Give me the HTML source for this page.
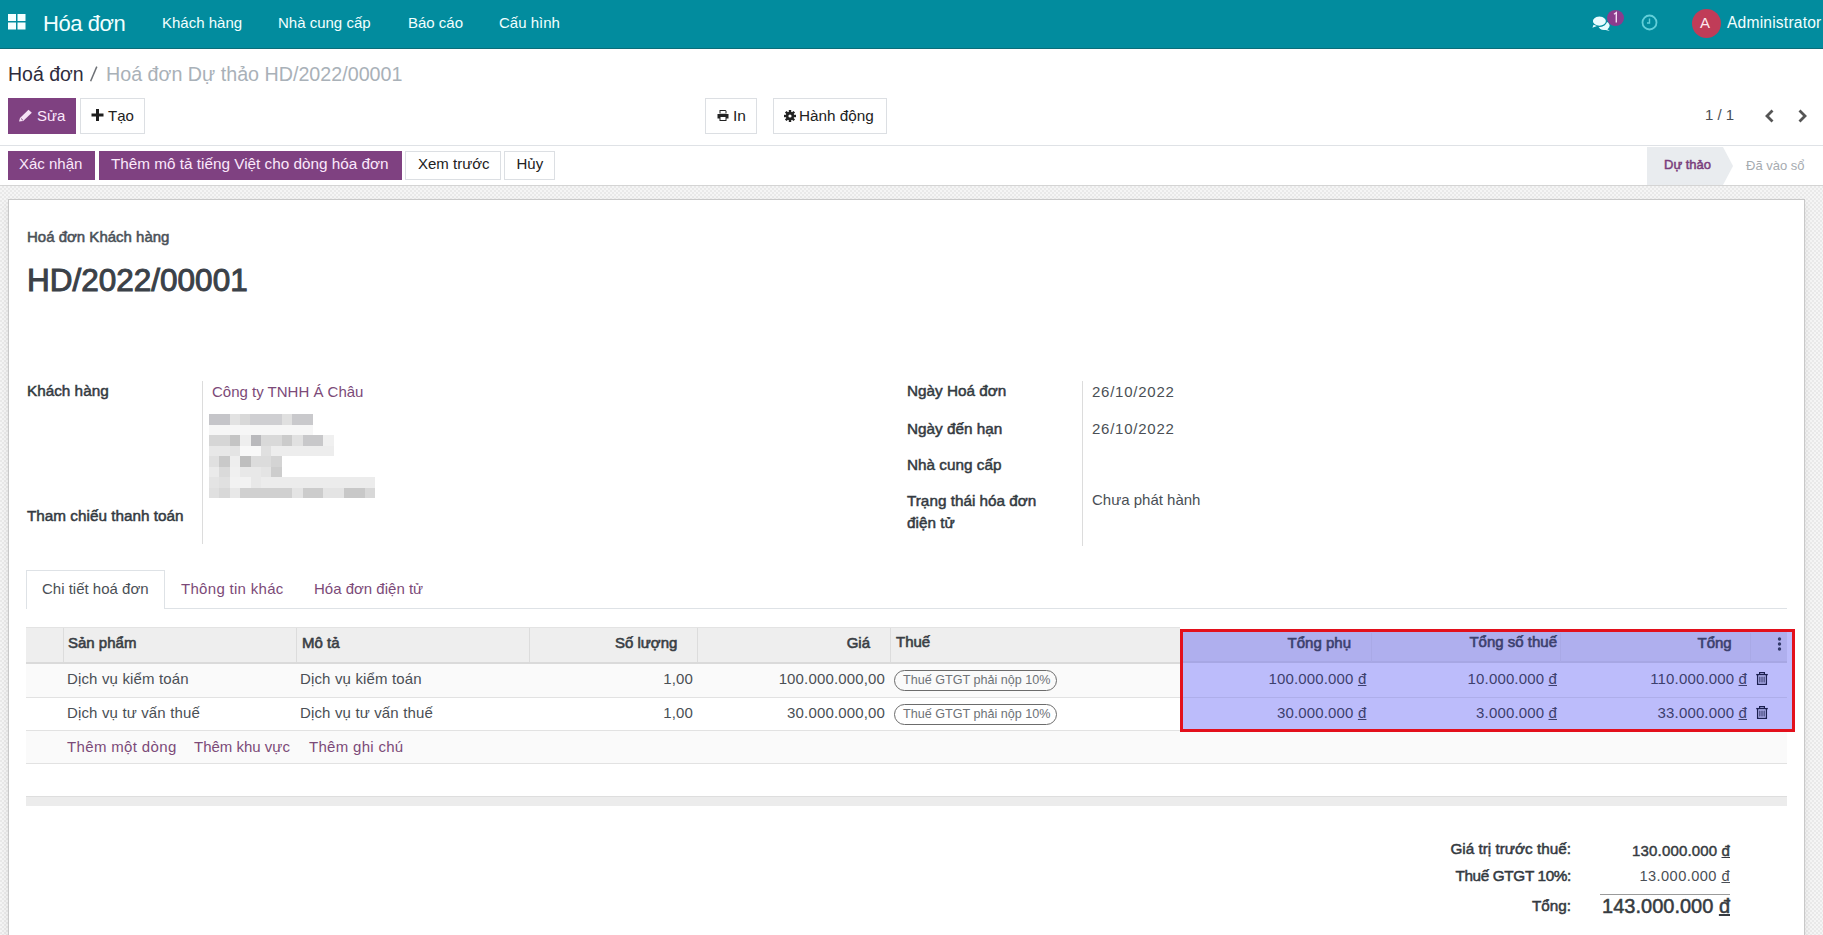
<!DOCTYPE html>
<html><head><meta charset="utf-8">
<style>
*{box-sizing:border-box;margin:0;padding:0}
html,body{width:1823px;height:935px;overflow:hidden;background:#fff;font-family:"Liberation Sans",sans-serif;color:#4c4c4c}
.a{position:absolute}
.t{position:absolute;line-height:1;white-space:nowrap}
.b{font-weight:bold}
#nav{left:0;top:0;width:1823px;height:49px;background:#028c9e;border-bottom:1px solid #0b6d79}
.nv{color:#f2ffff;font-size:15px}
.btn{position:absolute;border:1px solid #dcdfe3;background:#fff}
.pbtn{position:absolute;background:#7f4181}
.lbl{font-size:15.3px;-webkit-text-stroke:0.5px #343a41;color:#343a41}
.val{font-size:15px;color:#4a4f55}
.dt{letter-spacing:0.75px}
.lnk{font-size:15px;color:#7c4a78}
.th{font-size:15px;-webkit-text-stroke:0.6px currentColor;color:#3a3f45}
.td{font-size:15px;color:#4a4f55;letter-spacing:0.15px}
.ov{color:#3c406e}
</style></head><body>

<!-- NAVBAR -->
<div id="nav" class="a"></div>
<svg class="a" style="left:8px;top:14px" width="18" height="16" viewBox="0 0 18 16">
  <rect x="0" y="0" width="8" height="7" fill="#f4ffff"/><rect x="9.5" y="0" width="8" height="7" fill="#f4ffff"/>
  <rect x="0" y="8.5" width="8" height="7" fill="#f4ffff"/><rect x="9.5" y="8.5" width="8" height="7" fill="#f4ffff"/>
</svg>
<div class="t nv" style="left:43px;top:13.3px;font-size:22px;letter-spacing:-0.45px">Hóa đơn</div>
<div class="t nv" style="left:162px;top:14.8px">Khách hàng</div>
<div class="t nv" style="left:278px;top:14.8px">Nhà cung cấp</div>
<div class="t nv" style="left:408px;top:14.8px">Báo cáo</div>
<div class="t nv" style="left:499px;top:14.8px">Cấu hình</div>

<!-- chat icon -->
<svg class="a" style="left:1590px;top:14px" width="22" height="18" viewBox="0 0 22 18">
  <ellipse cx="14" cy="11.6" rx="5.6" ry="4.3" fill="#e6fbff"/>
  <path d="M16 14.3 L19.8 17 L13.5 15.4 Z" fill="#e6fbff"/>
  <ellipse cx="9.4" cy="7.1" rx="7.3" ry="5.4" fill="#028c9e"/>
  <ellipse cx="9.4" cy="7.1" rx="7.1" ry="5.2" fill="#eafcff" stroke="#028c9e" stroke-width="1.2"/>
  <path d="M3.5 10.8 L2.4 13.8 L7 11.9 Z" fill="#eafcff"/>
</svg>
<div class="a" style="left:1607px;top:10px;width:17px;height:16px;border-radius:50%;background:#8b3c8d"></div>
<svg class="a" style="left:1607px;top:10px" width="17" height="16" viewBox="0 0 17 16"><path d="M7 4.2 L9.3 2.6 V12.6" fill="none" stroke="#f4dcf4" stroke-width="1.4"/></svg>
<!-- clock -->
<svg class="a" style="left:1641px;top:14px" width="17" height="17" viewBox="0 0 17 17">
  <circle cx="8.5" cy="8.5" r="7" fill="none" stroke="#62cfd9" stroke-width="1.8"/>
  <path d="M8.5 4.5 V9 H6" fill="none" stroke="#62cfd9" stroke-width="1.4"/>
</svg>
<div class="a" style="left:1692px;top:9px;width:29px;height:29px;border-radius:50%;background:#c03c58"></div>
<div class="t" style="left:1700px;top:15px;font-size:15px;color:#fde8ee">A</div>
<div class="t nv" style="left:1727px;top:15.3px;font-size:15.6px;letter-spacing:0.2px">Administrator</div>

<!-- BREADCRUMB -->
<div class="t" style="left:8px;top:64.8px;font-size:19.5px;color:#2e2b3c">Hoá đơn</div>
<svg class="a" style="left:88px;top:64px" width="12" height="20" viewBox="0 0 12 20"><path d="M2.6 17.2 L8.8 2.6" stroke="#6e7176" stroke-width="1.5" fill="none"/></svg>
<div class="t" style="left:106px;top:64.8px;font-size:19.7px;color:#a9b1b8">Hoá đơn Dự thảo HD/2022/00001</div>

<!-- buttons -->
<div class="pbtn" style="left:8px;top:98px;width:68px;height:36px"></div>
<svg class="a" style="left:18px;top:109px" width="15" height="13" viewBox="0 0 15 13">
  <path d="M1 12.5 L2 9 L10.5 0.8 L13.8 3.8 L5.2 12 Z" fill="#f6e2f6"/>
  <path d="M3 9.5 L5 11.3" stroke="#7f4181" stroke-width="0.9"/>
</svg>
<div class="t" style="left:37px;top:108.2px;font-size:15px;color:#fbe8fb">Sửa</div>
<div class="btn" style="left:80px;top:98px;width:65px;height:36px"></div>
<svg class="a" style="left:91px;top:109px" width="13" height="12" viewBox="0 0 13 12">
  <path d="M5 0 H8 V4.5 H12.5 V7.5 H8 V12 H5 V7.5 H0.5 V4.5 H5 Z" fill="#1e1e1e"/>
</svg>
<div class="t" style="left:108px;top:108.2px;font-size:15px;color:#222">Tạo</div>

<div class="btn" style="left:705px;top:98px;width:52px;height:36px"></div>
<svg class="a" style="left:717px;top:110px" width="12" height="11" viewBox="0 0 12 11">
  <path d="M2.5 0 H8.5 L9.5 1 V3.5 H2.5 Z M0.5 4 H11.5 V8.5 H9.5 V11 H2.5 V8.5 H0.5 Z" fill="#222"/>
  <rect x="3.5" y="7" width="5" height="3" fill="#fff"/>
  <rect x="3.5" y="1" width="5" height="2.5" fill="#fff"/>
</svg>
<div class="t" style="left:733px;top:108.4px;font-size:15.5px;color:#222">In</div>
<div class="btn" style="left:773px;top:98px;width:114px;height:36px"></div>
<svg class="a" style="left:784px;top:110px" width="12" height="12" viewBox="0 0 12 12">
  <g fill="#222"><circle cx="6" cy="6" r="4.2"/>
  <rect x="4.8" y="0" width="2.4" height="12"/><rect x="0" y="4.8" width="12" height="2.4"/>
  <rect x="4.8" y="0" width="2.4" height="12" transform="rotate(45 6 6)"/><rect x="4.8" y="0" width="2.4" height="12" transform="rotate(-45 6 6)"/></g>
  <circle cx="6" cy="6" r="1.6" fill="#fff"/>
</svg>
<div class="t" style="left:799px;top:108.4px;font-size:15.3px;color:#222">Hành động</div>

<div class="t" style="left:1705px;top:107.3px;font-size:15px;color:#4a4f55">1 / 1</div>
<svg class="a" style="left:1764px;top:109px" width="11" height="14" viewBox="0 0 11 14">
  <path d="M8.5 1.5 L3 7 L8.5 12.5" fill="none" stroke="#555" stroke-width="2.8"/>
</svg>
<svg class="a" style="left:1797px;top:109px" width="11" height="14" viewBox="0 0 11 14">
  <path d="M2.5 1.5 L8 7 L2.5 12.5" fill="none" stroke="#555" stroke-width="2.8"/>
</svg>

<div class="a" style="left:0;top:145px;width:1823px;height:1px;background:#dfe2e6"></div>

<!-- STATUS BAR -->
<div class="pbtn" style="left:8px;top:151px;width:87px;height:29px"></div>
<div class="t" style="left:19px;top:156.3px;font-size:15px;color:#fbe8fb">Xác nhận</div>
<div class="pbtn" style="left:99px;top:151px;width:303px;height:29px"></div>
<div class="t" style="left:111px;top:156.3px;font-size:15.3px;color:#fbe8fb">Thêm mô tả tiếng Việt cho dòng hóa đơn</div>
<div class="btn" style="left:405px;top:151px;width:96px;height:29px"></div>
<div class="t" style="left:418px;top:156.3px;font-size:15px;color:#222">Xem trước</div>
<div class="btn" style="left:504px;top:151px;width:51px;height:29px"></div>
<div class="t" style="left:516.5px;top:156.3px;font-size:15px;color:#222">Hủy</div>

<svg class="a" style="left:1647px;top:147px" width="176" height="38" viewBox="0 0 176 38">
  <path d="M0 0 H76 L86 19 L76 38 H0 Z" fill="#e9ecef"/>
</svg>
<div class="t" style="left:1664px;top:158.3px;font-size:13px;color:#7a3d7c;-webkit-text-stroke:0.5px #7a3d7c">Dự thảo</div>
<div class="t" style="left:1746px;top:159px;font-size:13px;color:#a6abb0">Đã vào sổ</div>

<!-- SHEET BACKGROUND -->
<div class="a" style="left:0;top:185px;width:1823px;height:750px;background:repeating-conic-gradient(#e9e9e9 0 25%,#f5f5f5 0 50%) 0 0/4px 4px;border-top:1px solid #d4d4d4"></div>
<div class="a" style="left:8px;top:199px;width:1797px;height:800px;background:#fff;border:1px solid #c8c8c8;box-shadow:0 4px 8px rgba(0,0,0,0.08)"></div>

<div class="t" style="left:27px;top:229.3px;font-size:15px;-webkit-text-stroke:0.55px #4b5158;color:#4b5158">Hoá đơn Khách hàng</div>
<div class="t" style="left:27px;top:264.5px;font-size:31.5px;color:#3b4148;-webkit-text-stroke:1px #3b4148;letter-spacing:0px">HD/2022/00001</div>

<!-- fields left -->
<div class="t lbl" style="left:27px;top:382.7px">Khách hàng</div>
<div class="a" style="left:202px;top:381px;width:1px;height:163px;background:#dcdcdc"></div>
<div class="t lnk" style="left:212px;top:384px">Công ty TNHH Á Châu</div>
<svg class="a" style="left:209px;top:414px;filter:blur(0.5px)" width="170" height="85" viewBox="0 0 170 85" shape-rendering="crispEdges">
 <g>
  <rect x="0" y="0" width="21" height="10.5" fill="#c5c5c9"/><rect x="21" y="0" width="10.4" height="10.5" fill="#e2e2e2"/><rect x="31" y="0" width="10.4" height="10.5" fill="#d8d8d8"/><rect x="41.2" y="0" width="31.4" height="10.5" fill="#cfcfd2"/><rect x="72.5" y="0" width="10.4" height="10.5" fill="#e0e0e0"/><rect x="83" y="0" width="21" height="10.5" fill="#c9c9cc"/>
  <rect x="0" y="10.5" width="104" height="10.5" fill="#f6f6f6"/>
  <rect x="0" y="21" width="20.8" height="10.5" fill="#d6d6d6"/><rect x="20.8" y="21" width="10.4" height="10.5" fill="#c4c4c4"/><rect x="31.2" y="21" width="10.4" height="10.5" fill="#eeeeee"/><rect x="41.6" y="21" width="10.4" height="10.5" fill="#b9b9bc"/><rect x="52" y="21" width="20.8" height="10.5" fill="#d9d9d9"/><rect x="72.8" y="21" width="10.4" height="10.5" fill="#cbcbcb"/><rect x="83.2" y="21" width="10.4" height="10.5" fill="#e1e1e1"/><rect x="93.6" y="21" width="20.8" height="10.5" fill="#c8c8ca"/><rect x="114.4" y="21" width="10.4" height="10.5" fill="#f0f0f0"/>
  <rect x="0" y="31.5" width="20.8" height="10.5" fill="#e8e8e8"/><rect x="20.8" y="31.5" width="10.4" height="10.5" fill="#e4e4e4"/><rect x="31.2" y="31.5" width="20.8" height="10.5" fill="#f8f8f8"/><rect x="52" y="31.5" width="10.4" height="10.5" fill="#e0e0e0"/><rect x="62.4" y="31.5" width="62.4" height="10.5" fill="#ededed"/>
  <rect x="0" y="42" width="10.4" height="10.5" fill="#e0e0e0"/><rect x="10.4" y="42" width="10.4" height="10.5" fill="#c9c9c9"/><rect x="20.8" y="42" width="10.4" height="10.5" fill="#eeeeee"/><rect x="31.2" y="42" width="10.4" height="10.5" fill="#bebebe"/><rect x="41.6" y="42" width="20.8" height="10.5" fill="#dcdcdc"/><rect x="62.4" y="42" width="10.4" height="10.5" fill="#d4d4d4"/>
  <rect x="0" y="52.5" width="10.4" height="10.5" fill="#eaeaea"/><rect x="10.4" y="52.5" width="10.4" height="10.5" fill="#dadada"/><rect x="20.8" y="52.5" width="10.4" height="10.5" fill="#f0f0f0"/><rect x="31.2" y="52.5" width="20.8" height="10.5" fill="#e8e8e8"/><rect x="52" y="52.5" width="10.4" height="10.5" fill="#e4e4e4"/><rect x="62.4" y="52.5" width="10.4" height="10.5" fill="#cdcdcd"/>
  <rect x="0" y="63" width="10.4" height="10.5" fill="#e4e4e4"/><rect x="10.4" y="63" width="10.4" height="10.5" fill="#e0e0e0"/><rect x="20.8" y="63" width="20.8" height="10.5" fill="#f2f2f2"/><rect x="41.6" y="63" width="10.4" height="10.5" fill="#e8e8e8"/><rect x="52" y="63" width="114.4" height="10.5" fill="#ececec"/>
  <rect x="0" y="73.5" width="10.4" height="10.5" fill="#e0e0e0"/><rect x="10.4" y="73.5" width="10.4" height="10.5" fill="#d8d8d8"/><rect x="20.8" y="73.5" width="10.4" height="10.5" fill="#e8e8e8"/><rect x="31.2" y="73.5" width="52" height="10.5" fill="#d0d0d0"/><rect x="83.2" y="73.5" width="10.4" height="10.5" fill="#e4e4e4"/><rect x="93.6" y="73.5" width="20.8" height="10.5" fill="#cccccc"/><rect x="114.4" y="73.5" width="20.8" height="10.5" fill="#e4e4e4"/><rect x="135.2" y="73.5" width="20.8" height="10.5" fill="#c8c8c8"/><rect x="156" y="73.5" width="10.4" height="10.5" fill="#d8d8d8"/>
 </g>
</svg>
<div class="t lbl" style="left:27px;top:507.7px">Tham chiếu thanh toán</div>

<!-- fields right -->
<div class="t lbl" style="left:907px;top:382.5px">Ngày Hoá đơn</div>
<div class="t lbl" style="left:907px;top:420.8px">Ngày đến hạn</div>
<div class="t lbl" style="left:907px;top:456.8px">Nhà cung cấp</div>
<div class="t lbl" style="left:907px;top:492.8px">Trạng thái hóa đơn</div>
<div class="t lbl" style="left:907px;top:515px">điện tử</div>
<div class="a" style="left:1082px;top:381px;width:1px;height:165px;background:#dcdcdc"></div>
<div class="t val dt" style="left:1092px;top:383.5px">26/10/2022</div>
<div class="t val dt" style="left:1092px;top:420.8px">26/10/2022</div>
<div class="t val" style="left:1092px;top:492.3px">Chưa phát hành</div>

<!-- TABS -->
<div class="a" style="left:26px;top:608px;width:1761px;height:1px;background:#dee2e6"></div>
<div class="a" style="left:26px;top:570px;width:139px;height:39px;background:#fff;border:1px solid #dee2e6;border-bottom:none"></div>
<div class="t" style="left:42px;top:581px;font-size:15px;color:#4a4f55">Chi tiết hoá đơn</div>
<div class="t lnk" style="left:181px;top:581px;letter-spacing:0.3px">Thông tin khác</div>
<div class="t lnk" style="left:314px;top:581px">Hóa đơn điện tử</div>

<!-- TABLE -->
<div class="a" style="left:26px;top:627px;width:1761px;height:37px;background:#eeeeee;border-top:1px solid #e3e3e3;border-bottom:2px solid #dadada"></div>
<div class="a" style="left:26px;top:664px;width:1761px;height:34px;background:#fafafa;border-bottom:1px solid #e2e2e2"></div>
<div class="a" style="left:26px;top:698px;width:1761px;height:33px;background:#fff;border-bottom:1px solid #e2e2e2"></div>
<div class="a" style="left:26px;top:731px;width:1761px;height:33px;background:#fafafa;border-bottom:1px solid #e2e2e2"></div>
<!-- header separators -->
<div class="a" style="left:63px;top:628px;width:1px;height:34px;background:#dcdcdc"></div>
<div class="a" style="left:296px;top:628px;width:1px;height:34px;background:#dcdcdc"></div>
<div class="a" style="left:529px;top:628px;width:1px;height:34px;background:#dcdcdc"></div>
<div class="a" style="left:697px;top:628px;width:1px;height:34px;background:#dcdcdc"></div>
<div class="a" style="left:890px;top:628px;width:1px;height:34px;background:#dcdcdc"></div>

<div class="t th" style="left:68px;top:635.2px">Sản phẩm</div>
<div class="t th" style="left:302px;top:635.2px">Mô tả</div>
<div class="t th" style="right:1145.6px;top:635.2px">Số lượng</div>
<div class="t th" style="right:953px;top:635.2px">Giá</div>
<div class="t th" style="left:896px;top:634.2px">Thuế</div>

<div class="t td" style="left:67px;top:671.3px">Dịch vụ kiểm toán</div>
<div class="t td" style="left:300px;top:671.3px">Dịch vụ kiểm toán</div>
<div class="t td" style="right:1130px;top:671.3px">1,00</div>
<div class="t td" style="right:938px;top:671.3px">100.000.000,00</div>
<div class="a" style="left:894px;top:670px;width:163px;height:21px;border:1px solid #6c6c6c;border-radius:11px"></div>
<div class="t" style="left:903px;top:673.5px;font-size:12.6px;color:#6e7378">Thuế GTGT phải nộp 10%</div>

<div class="t td" style="left:67px;top:704.9px">Dịch vụ tư vấn thuế</div>
<div class="t td" style="left:300px;top:704.9px">Dịch vụ tư vấn thuế</div>
<div class="t td" style="right:1130px;top:704.9px">1,00</div>
<div class="t td" style="right:938px;top:704.9px">30.000.000,00</div>
<div class="a" style="left:894px;top:704px;width:163px;height:21px;border:1px solid #6c6c6c;border-radius:11px"></div>
<div class="t" style="left:903px;top:707.5px;font-size:12.6px;color:#6e7378">Thuế GTGT phải nộp 10%</div>

<div class="t lnk" style="left:67px;top:738.9px;letter-spacing:0.35px">Thêm một dòng</div>
<div class="t lnk" style="left:194px;top:738.9px">Thêm khu vực</div>
<div class="t lnk" style="left:309px;top:738.9px;letter-spacing:0.3px">Thêm ghi chú</div>

<!-- HIGHLIGHT BOX -->
<div class="a" style="left:1180px;top:627px;width:615px;height:2px;background:#fff"></div>
<div class="a" style="left:1180px;top:629px;width:615px;height:103px;border:3px solid #e3101c;background:#bcbcfb"></div>
<div class="a" style="left:1183px;top:632px;width:604px;height:31px;background:#afafee;border-bottom:2px solid #a7a7e4"></div>
<div class="a" style="left:1183px;top:697px;width:604px;height:1px;background:#aeaeea"></div>
<div class="a" style="left:1371px;top:633px;width:1px;height:29px;background:#a9a9e6"></div>
<div class="a" style="left:1560px;top:633px;width:1px;height:29px;background:#a9a9e6"></div>
<div class="a" style="left:1750px;top:633px;width:1px;height:29px;background:#a9a9e6"></div>

<div class="t th ov" style="right:472px;top:635.2px">Tổng phụ</div>
<div class="t th ov" style="right:266px;top:634.2px">Tổng số thuế</div>
<div class="t th ov" style="right:91.3px;top:635.2px">Tổng</div>
<svg class="a" style="left:1777px;top:637px" width="5" height="14" viewBox="0 0 5 14">
  <circle cx="2.5" cy="2" r="1.7" fill="#333a6a"/><circle cx="2.5" cy="7" r="1.7" fill="#333a6a"/><circle cx="2.5" cy="12" r="1.7" fill="#333a6a"/>
</svg>

<div class="t td ov" style="right:456.6px;top:671.3px">100.000.000 <u>đ</u></div>
<div class="t td ov" style="right:266px;top:671.3px">10.000.000 <u>đ</u></div>
<div class="t td ov" style="right:76px;top:671.3px">110.000.000 <u>đ</u></div>
<div class="t td ov" style="right:456.6px;top:704.9px">30.000.000 <u>đ</u></div>
<div class="t td ov" style="right:266px;top:704.9px">3.000.000 <u>đ</u></div>
<div class="t td ov" style="right:76px;top:704.9px">33.000.000 <u>đ</u></div>
<svg class="a" style="left:1756px;top:672px" width="12" height="13" viewBox="0 0 12 13">
  <g fill="none" stroke="#1c2050"><path d="M3.6 2 V0.7 H8.4 V2" stroke-width="1.2"/><path d="M0.2 2.6 H11.8" stroke-width="1.3"/>
  <path d="M1.6 3 V12.3 H10.4 V3" stroke-width="1.3"/><path d="M3.9 4.5 V10.6 M6 4.5 V10.6 M8.1 4.5 V10.6" stroke-width="1"/></g>
</svg>
<svg class="a" style="left:1756px;top:706px" width="12" height="13" viewBox="0 0 12 13">
  <g fill="none" stroke="#1c2050"><path d="M3.6 2 V0.7 H8.4 V2" stroke-width="1.2"/><path d="M0.2 2.6 H11.8" stroke-width="1.3"/>
  <path d="M1.6 3 V12.3 H10.4 V3" stroke-width="1.3"/><path d="M3.9 4.5 V10.6 M6 4.5 V10.6 M8.1 4.5 V10.6" stroke-width="1"/></g>
</svg>

<!-- gray bar -->
<div class="a" style="left:26px;top:796px;width:1761px;height:10px;background:#ececec;border-top:1px solid #dedede"></div>

<!-- TOTALS -->
<div class="t lbl" style="right:252px;top:840.7px">Giá trị trước thuế:</div>
<div class="t" style="right:93px;top:843px;font-size:15px;color:#363b41;-webkit-text-stroke:0.45px #363b41;letter-spacing:0.15px">130.000.000 <u>đ</u></div>
<div class="t lbl" style="right:252px;top:867.5px;letter-spacing:-0.35px">Thuế GTGT 10%:</div>
<div class="t" style="right:93px;top:868.6px;font-size:14.6px;color:#4a4f55;letter-spacing:0.45px">13.000.000 <u>đ</u></div>
<div class="a" style="left:1600px;top:894px;width:130px;height:1px;background:#9a9a9a"></div>
<div class="t lbl" style="right:252px;top:897.7px">Tổng:</div>
<div class="t" style="right:93px;top:896px;font-size:20px;color:#363b41;-webkit-text-stroke:0.5px #363b41">143.000.000 <u>đ</u></div>

</body></html>
